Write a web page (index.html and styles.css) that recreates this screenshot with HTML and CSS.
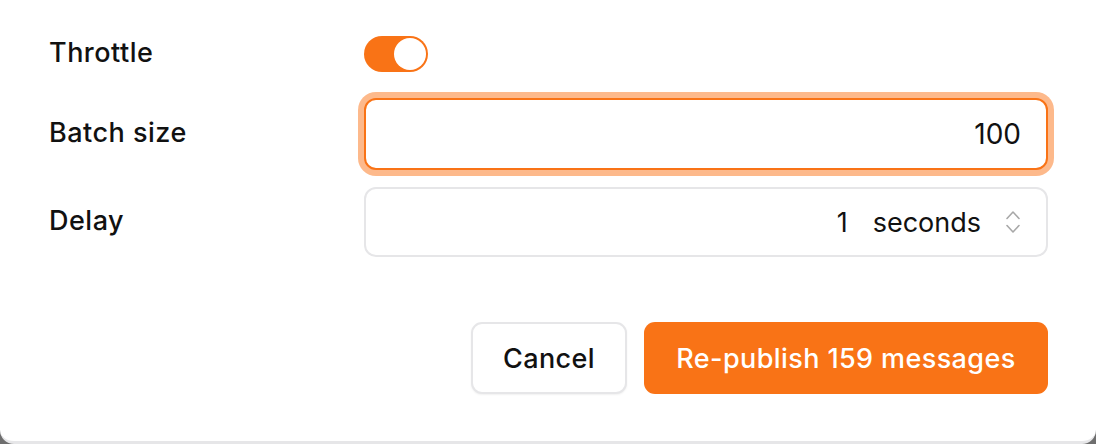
FILE: index.html
```html
<!DOCTYPE html>
<html lang="en">
<head>
<meta charset="utf-8">
<link rel="stylesheet" href="styles.css">
<title>Re-publish</title>
</head>
<body>
<div class="dialog">
  <div class="form">
    <div class="row row-toggle">
      <div class="label">Throttle</div>
      <div class="control">
        <div class="toggle"><span class="knob"></span></div>
      </div>
    </div>
    <div class="row row-input">
      <div class="label">Batch size</div>
      <div class="control">
        <div class="input focused">100</div>
      </div>
    </div>
    <div class="row row-select">
      <div class="label">Delay</div>
      <div class="control">
        <div class="input select">
          <span class="num">1</span>
          <span class="unit">seconds</span>
          <svg class="chev" width="16" height="26" viewBox="0 0 16 26" fill="none" stroke="#a8a8a8" stroke-width="1.6" stroke-linecap="round" stroke-linejoin="round"><path d="M2 9.5 L8 3 L14 9.5"/><path d="M2 16.5 L8 23 L14 16.5"/></svg>
        </div>
      </div>
    </div>
  </div>
  <div class="footer">
    <button class="btn btn-secondary">Cancel</button>
    <button class="btn btn-primary">Re-publish 159 messages</button>
  </div>
</div>
</body>
</html>
```
FILE: styles.css
```css
* { box-sizing: border-box; }
html, body { margin: 0; padding: 0; }
body {
  width: 1096px;
  height: 444px;
  background: #6e6e6e;
  font-family: Inter, "Noto Sans", sans-serif;
  color: #111111;
  overflow: hidden;
}
.dialog {
  width: 1096px;
  height: 444px;
  background: #ffffff;
  border-bottom: 3px solid #e6e6e8;
  border-radius: 0 0 14px 14px;
  padding: 36px 48px 0 49px;
  display: flex;
  flex-direction: column;
}
.form {
  display: flex;
  flex-direction: column;
}
.row {
  display: flex;
  align-items: center;
}
.row-toggle { height: 36px; }
.row-input { height: 72px; margin-top: 26px; }
.row-select { height: 70px; margin-top: 17px; }
.label {
  width: 315px;
  font-size: 27px;
  font-weight: 500;
  letter-spacing: 0.5px;
  margin-top: -4px;
}
.control {
  flex: 1;
  height: 100%;
  display: flex;
  align-items: center;
}
.toggle {
  width: 64px;
  height: 36px;
  border-radius: 18px;
  background: #f97316;
  position: relative;
}
.knob {
  position: absolute;
  right: 2px;
  top: 2px;
  width: 32px;
  height: 32px;
  border-radius: 50%;
  background: #ffffff;
}
.input {
  width: 100%;
  height: 100%;
  border: 2px solid #e6e6e8;
  border-radius: 12px;
  background: #fff;
  display: flex;
  align-items: center;
  justify-content: flex-end;
  padding: 0 25px;
  font-size: 27px;
  font-weight: 400;
}
.input.focused {
  border-color: #f97316;
  box-shadow: 0 0 0 6px #fdb98b;
  font-size: 28px;
}
.select .num { margin-right: 25px; }
.select .unit { margin-right: 24px; }
.chev { display: block; }
.footer {
  display: flex;
  justify-content: flex-end;
  gap: 17px;
  margin-top: 65px;
}
.btn {
  height: 72px;
  border-radius: 11px;
  font-family: Inter, "Noto Sans", sans-serif;
  font-size: 27px;
  font-weight: 500;
  letter-spacing: 0.4px;
  padding: 0;
  cursor: pointer;
}
.btn-secondary {
  width: 156px;
  background: #fff;
  color: #111;
  border: 2px solid #e6e6e8;
  box-shadow: 0 1px 2px rgba(0,0,0,0.06);
}
.btn-primary {
  width: 404px;
  background: #f97316;
  color: #fff;
  border: none;
}
```
